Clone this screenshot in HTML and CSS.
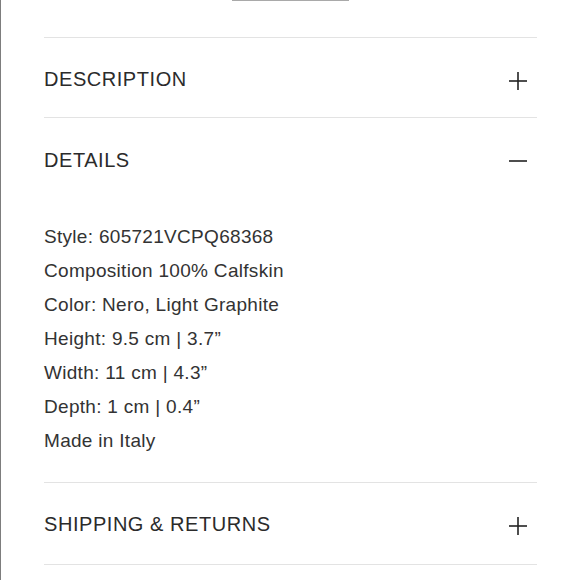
FILE: index.html
```html
<!DOCTYPE html>
<html>
  <head>
    <meta charset="UTF-8" />
    <title>Product details</title>
    <link rel="stylesheet" href="styles.css">
  </head>
  <body>
    <div id="page">
      <div class="tab-mark"></div>
      <div class="accordion">
        <div class="acc-item">
          <div class="acc-head">
            <span class="acc-title">DESCRIPTION</span>
            <svg class="acc-icon" width="18" height="18" viewBox="0 0 18 18">
              <line x1="0" y1="9" x2="18" y2="9" />
              <line x1="9" y1="0" x2="9" y2="18" />
            </svg>
          </div>
        </div>
        <div class="acc-item open">
          <div class="acc-head">
            <span class="acc-title">DETAILS</span>
            <svg class="acc-icon" width="18" height="18" viewBox="0 0 18 18">
              <line x1="0" y1="9" x2="18" y2="9" />
            </svg>
          </div>
          <ul class="acc-body">
            <li>Style: 605721VCPQ68368</li>
            <li>Composition 100% Calfskin</li>
            <li>Color: Nero, Light Graphite</li>
            <li>Height: 9.5 cm | 3.7”</li>
            <li>Width: 11 cm | 4.3”</li>
            <li>Depth: 1 cm | 0.4”</li>
            <li>Made in Italy</li>
          </ul>
        </div>
        <div class="acc-item">
          <div class="acc-head">
            <span class="acc-title">SHIPPING &amp; RETURNS</span>
            <svg class="acc-icon" width="18" height="18" viewBox="0 0 18 18">
              <line x1="0" y1="9" x2="18" y2="9" />
              <line x1="9" y1="0" x2="9" y2="18" />
            </svg>
          </div>
        </div>
      </div>
    </div>
  </body>
</html>
```

FILE: styles.css
```css
body {
    margin: 0;
    padding: 0;
    font-family: "Liberation Sans", Arial, Helvetica, sans-serif;
    background-color: #fff;
    color: #2b2b2b;
}

#page {
    min-height: 580px;
    box-sizing: border-box;
    border-left: 1px solid #7d7d7d;
}

.tab-mark {
    width: 117px;
    height: 1px;
    margin-left: 231px;
    background-color: #a9a9a9;
}

.accordion {
    margin: 36px 43px 0 43px;
    border-top: 1px solid #e3e3e3;
}

.acc-item {
    border-bottom: 1px solid #e3e3e3;
}

.acc-head {
    display: flex;
    align-items: center;
    justify-content: space-between;
    height: 79px;
    padding-top: 4px;
    box-sizing: border-box;
}

.acc-item.open .acc-head {
    height: 80px;
}

.acc-title {
    font-size: 20px;
    letter-spacing: 0.55px;
}

.acc-icon {
    margin: 2px 10px 0 0;
}

.acc-icon line {
    stroke: #222;
    stroke-width: 1.6;
}

.acc-body {
    list-style: none;
    margin: 0;
    padding: 22px 0 24px 0;
}

.acc-body li {
    font-size: 19px;
    line-height: 34px;
    letter-spacing: 0.3px;
    color: #333;
}

.acc-item:last-child .acc-head {
    height: 81px;
    padding-top: 2px;
}
```
